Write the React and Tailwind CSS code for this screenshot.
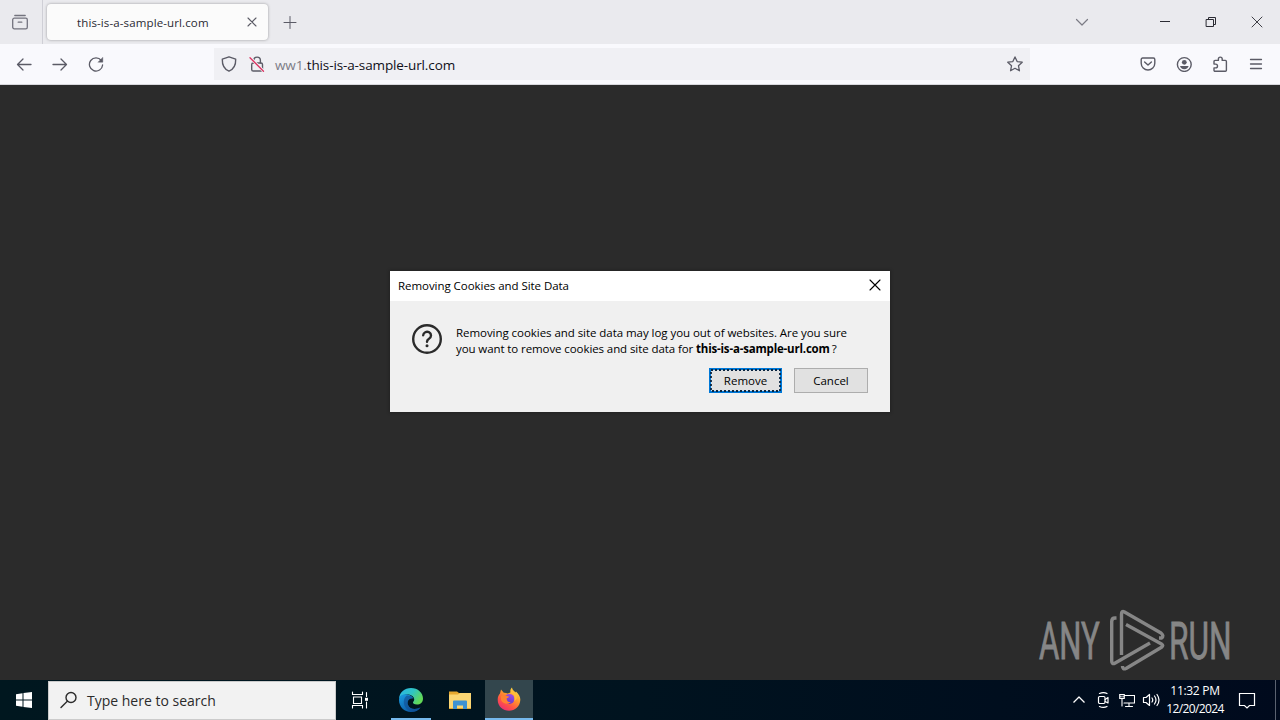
import React from 'react';

const Icon = ({ size = 16, className = '', children, sw = 1.2 }) => (
    <svg
        width={size}
        height={size}
        viewBox={`0 0 ${size} ${size}`}
        fill="none"
        stroke="currentColor"
        strokeWidth={sw}
        strokeLinecap="round"
        strokeLinejoin="round"
        className={`shrink-0 ${className}`}
    >
        {children}
    </svg>
);

const TabBar = () => (
    <div className="flex h-11 items-center bg-[#eaeaee] text-[#5b5b66]">
        <div className="flex h-full w-[43px] items-center border-r border-[#cfcfd6] pl-3 text-[#73737e]">
            <Icon sw={1.3}>
                <path d="M2.8 1.5h10.4" />
                <rect x="0.7" y="4.2" width="14.6" height="10.6" rx="1.6" />
                <path d="M6.2 8.2h3.6" />
            </Icon>
        </div>
        <div className="ml-1 flex h-9 w-[221px] items-center rounded bg-[#fbfbfb] pl-[30px] shadow-[0_0_3px_rgba(0,0,0,0.35)]">
            <span className="w-[166px] pt-px whitespace-nowrap text-[11.5px] tracking-[0.12px] text-[#2a2a33]">this-is-a-sample-url.com</span>
            <Icon size={18} sw={1.1}>
                <path d="M5 5l8 8M13 5l-8 8" />
            </Icon>
        </div>
        <Icon size={16} className="ml-3.5" sw={1}>
            <path d="M8 2.5v12M2 8.5h12" />
        </Icon>
        <div className="flex-1" />
        <Icon size={16} className="mr-[52px] text-[#7b7b85]" sw={1.2}>
            <path d="M2.5 5.5L8 11l5.5-5.5" />
        </Icon>
        <div className="flex text-[#2b2b33]">
            <div className="flex w-[46px] justify-center">
                <Icon size={14} sw={1}><path d="M2 6.5h10" strokeLinecap="butt" /></Icon>
            </div>
            <div className="flex w-[46px] justify-center">
                <Icon size={14} sw={1}>
                    <path d="M2.5 4.5h7v7h-7zM4.5 4.5v-2h7v7h-2" strokeLinejoin="miter" />
                </Icon>
            </div>
            <div className="flex w-[46px] justify-center">
                <Icon size={14} sw={0.9}><path d="M2 2l10 10M12 2L2 12" /></Icon>
            </div>
        </div>
    </div>
);

const Toolbar = () => (
    <div className="flex h-[41px] items-center border-b border-[#d8d8dd] bg-[#f9f9fd] px-1.5 text-[#5b5b66]">
        <div className="flex w-9 justify-center">
            <Icon sw={1.3}><path d="M15 8.5H1.5M7 3L1.5 8.5 7 14" /></Icon>
        </div>
        <div className="flex w-9 justify-center">
            <Icon sw={1.3}><path d="M1 8.5h13.5M9 3l5.5 5.5L9 14" /></Icon>
        </div>
        <div className="flex w-9 justify-center">
            <Icon sw={1.3}>
                <path d="M13.3 4.5A6.6 6.6 0 1 0 14.6 9" />
                <path d="M14.8 1.6v4.6h-4.6z" fill="currentColor" strokeWidth="0.4" />
            </Icon>
        </div>
        <div className="ml-[100px] flex h-8 w-[816px] items-center bg-[#f0f0f4] px-[7px]">
            <Icon sw={1.4}>
                <path d="M8 0.8L14.7 3.2C14.9 9.4 12.6 13.2 8 15.2 3.4 13.2 1.1 9.4 1.3 3.2z" />
            </Icon>
            <Icon className="ml-3" sw={1.4}>
                <rect x="2.7" y="7" width="10.8" height="8" rx="1.6" />
                <path d="M4.8 7V4.4a3.3 3.3 0 0 1 6.6 0V7" />
                <path d="M1.2 1.8l13 13" stroke="#f0f0f4" strokeWidth="3" />
                <path d="M1 1.8l13.5 13.4" stroke="#dc3563" strokeWidth="1.3" />
            </Icon>
            <span className="ml-2.5 flex-1 pt-[3px] whitespace-nowrap text-[13.5px] tracking-[-0.12px] text-[#0f0f18]">
                <span className="text-[#7c7c86]">ww1.</span>this-is-a-sample-url.com
            </span>
            <Icon sw={1.3}>
                <path d="M8 0.9l2.15 4.7 5.1.6-3.8 3.5 1 5.1L8 12.3l-4.45 2.5 1-5.1L.75 6.2l5.1-.6z" />
            </Icon>
        </div>
        <div className="ml-[100px] flex">
            <div className="flex w-9 justify-center">
                <Icon sw={1.4}>
                    <path d="M2.6 2h10.8a1.4 1.4 0 0 1 1.4 1.4V7.2a6.8 6.8 0 0 1-13.6 0V3.4A1.4 1.4 0 0 1 2.6 2z" />
                    <path d="M4.6 6L8 9.1 11.4 6" />
                </Icon>
            </div>
            <div className="flex w-9 justify-center">
                <Icon sw={1.4}>
                    <circle cx="8.3" cy="8.5" r="6.9" />
                    <circle cx="8.3" cy="6.3" r="2.4" fill="currentColor" stroke="none" />
                    <path d="M4 10h8.6c-.4 1.9-2 3.2-4.3 3.2S4.4 11.9 4 10z" fill="currentColor" stroke="none" />
                </Icon>
            </div>
            <div className="flex w-9 justify-center">
                <Icon sw={1.4}>
                    <path d="M2 7.2V5.4a1 1 0 0 1 1-1h3.4V3a1.9 1.9 0 0 1 3.8 0v1.4h3.2a1 1 0 0 1 1 1v8.8a1 1 0 0 1-1 1H3a1 1 0 0 1-1-1v-2.3h1.6a1.9 1.9 0 0 0 0-3.8H2z" />
                </Icon>
            </div>
            <div className="flex w-9 justify-center">
                <Icon sw={1.3}><path d="M2.5 3.5h11M2.5 8h11M2.5 12.5h11" /></Icon>
            </div>
        </div>
    </div>
);

const CookieDialog = () => (
    <div className="mt-[186px] h-[141px] w-[500px] bg-[#f0f0f0] text-[11.5px] text-black shadow-[0_0_3px_1px_rgba(0,0,0,0.2)]">
        <div className="flex h-[30px] items-center justify-between bg-white px-2">
            <span className="pb-px whitespace-nowrap tracking-[-0.05px]">Removing Cookies and Site Data</span>
            <Icon size={14} sw={1.1} className="-mt-0.5"><path d="M2 2l10 10M12 2L2 12" /></Icon>
        </div>
        <div className="flex pl-[21px] pt-[22px]">
            <Icon size={32} sw={2.4} className="text-[#2b2b2b]">
                <circle cx="16" cy="16" r="13.8" />
                <path d="M12.2 12.3a3.9 3.7 0 1 1 5.8 3.4c-1.4.8-2 1.4-2 3" />
                <circle cx="16" cy="22.8" r="1.5" fill="currentColor" stroke="none" />
            </Icon>
            <p className="ml-[13px] mt-0.5 whitespace-nowrap leading-4">
                <span className="tracking-[-0.05px]">Removing cookies and site data may log you out of websites. Are you sure</span>
                <br />
                <span className="tracking-[-0.09px]">you want to remove cookies and site data for </span>
                <b className="tracking-[-0.19px]">this-is-a-sample-url.com</b>
                <span className="ml-0.5">?</span>
            </p>
        </div>
        <div className="mt-[11px] flex justify-end gap-3 pr-[22px]">
            <button className="relative h-[25px] w-[73px] border-2 border-[#0078d7] bg-[#e1e1e1]">
                Remove
                <svg className="absolute -left-px -top-px" width="71" height="23" fill="none">
                    <rect x="1" y="1" width="69" height="21" stroke="#0a2540" strokeWidth="1.8" strokeDasharray="2 2" />
                </svg>
            </button>
            <button className="h-[25px] w-[74px] border border-[#adadad] bg-[#e1e1e1]">Cancel</button>
        </div>
    </div>
);

const Watermark = () => (
    <svg width="194" height="64" viewBox="1038 608 194 64" fill="none" className="absolute bottom-2 right-12">
        <g fill="#868686" stroke="#868686" strokeWidth="0.8" fontFamily="Roboto, sans-serif" fontSize="51">
            <text transform="translate(1039 659) scale(0.62 1)" textLength="98" lengthAdjust="spacingAndGlyphs">ANY</text>
            <text transform="translate(1169 659) scale(0.62 1)" textLength="101" lengthAdjust="spacingAndGlyphs">RUN</text>
        </g>
        <g stroke="#868686" strokeWidth="3.4" strokeLinejoin="round" strokeLinecap="butt">
            <path d="M1116.5 618h-1.5q-3.3 0-3.3 3.5V661q0 4 3.5 2L1150 643" />
            <path d="M1121.5 655V614q0-3.500 3-2l36.500 21q3.500 3 .5 5h-2.500" />
            <path d="M1126 624.500L1161.500 644q2.500 1.500 0 3.300L1126 668.500q-3.500 1.500-3.500-2.500" />
        </g>
    </svg>
);

const EdgeLogo = () => (
    <svg width="26" height="26" viewBox="0 0 26 26">
        <defs>
            <linearGradient id="edgeTop" x1="0" y1="0" x2="1" y2="0.5">
                <stop offset="0" stopColor="#2bb5e8" />
                <stop offset="0.55" stopColor="#2fc4c4" />
                <stop offset="1" stopColor="#62d957" />
            </linearGradient>
            <linearGradient id="edgeBase" x1="0" y1="0" x2="0.6" y2="1">
                <stop offset="0" stopColor="#1b9de2" />
                <stop offset="1" stopColor="#0b59a4" />
            </linearGradient>
        </defs>
        <path d="M1 12C1.5 5 6.5 1 13 1c7 0 12 5 12 10.5 0 4-2.8 6-6 6-3 0-4.3-1.2-4-2.3.6-.8 1.2-1.5 1.2-2.9C16 9.5 13 7.5 9 7.5c-4 0-7 2.2-8 4.5z" fill="url(#edgeTop)" />
        <path d="M1 13C1 9 4.5 6.8 9 7.5c3.5.5 5.5 2.2 6.5 4-4-1-7 2.5-5.5 6.5 1.7 4.3 7.5 5 12.5 2.5C20.5 23.5 17 25 13 25 6 25 1 19.5 1 13z" fill="url(#edgeBase)" />
        <path d="M9 8.5c-3 2-4 6-2.5 10S12 25 15 24.8c3.5-.5 6-2.2 7.5-4.3-5 2.5-10.8 1.8-12.5-2.5-1.5-4 1.5-7.5 5.5-6.5C14 9.5 12 8.5 9 8.5z" fill="#124f94" opacity="0.65" />
    </svg>
);

const FolderLogo = () => (
    <svg width="24" height="22" viewBox="0 0 24 22">
        <path d="M1 2.5h8l2 1.5h12V20H1z" fill="#e6a82f" />
        <path d="M1 5.5h9l2-1.5h11v15H1z" fill="#fbd673" />
        <path d="M5 12.5q0-1 1-1h12q1 0 1 1V20h-4v-3.5H9V20H5z" fill="#3f92d2" />
    </svg>
);

const FirefoxLogo = () => (
    <svg width="26" height="26" viewBox="0 0 26 26">
        <defs>
            <linearGradient id="fox" x1="0.85" y1="0" x2="0.2" y2="1">
                <stop offset="0" stopColor="#ffe84a" />
                <stop offset="0.4" stopColor="#ff982b" />
                <stop offset="0.7" stopColor="#ff5345" />
                <stop offset="1" stopColor="#e82a78" />
            </linearGradient>
            <linearGradient id="foxGlobe" x1="0.7" y1="0" x2="0.3" y2="1">
                <stop offset="0" stopColor="#a04be8" />
                <stop offset="1" stopColor="#5d3bc4" />
            </linearGradient>
        </defs>
        <path d="M4 7.5L5 3.5l2.8 3.2C9 6.5 10.500 7 11.5 7.5l3-1c-.5-2 0-3.5 1.5-5 .3 2.3 1.6 3.4 3.4 4.9l.6-1C23 8 24.5 11 24.3 14 24 20.5 19 24.8 13 24.8S1.7 20.5 1.7 13.8C1.7 11 2.5 9 4 7.5z" fill="url(#fox)" />
        <circle cx="13.4" cy="12.9" r="5" fill="url(#foxGlobe)" />
        <path d="M5 10c2-1.500 4.500-1.200 6 0l2 .4c-.3 1.200-1.300 1.300-2.300 1.900-.2 2.700 1.800 4 4 3.800-1.500 2.500-7.700 2.500-9.700-2z" fill="#ff8232" />
        <path d="M14.5 6.5c3 1 5 4.500 3.800 8.5 2-1 3-2.800 2.700-5.500-.5-2.500-3-4.500-5-6z" fill="#ffbd3a" />
    </svg>
);

const Taskbar = () => (
    <div className="flex h-10 items-center bg-linear-to-r from-[#00171f] via-[#00131f] to-[#000a1d] text-white">
        <div className="flex w-12 justify-center">
            <svg width="16" height="16" viewBox="0 0 16 16" fill="white">
                <path d="M0 2.2l6.5-.9v6.2H0zM7.5 1.1L16 0v7.5H7.5zM0 8.5h6.5v6.2L0 13.8zM7.5 8.5H16V16l-8.5-1.1z" />
            </svg>
        </div>
        <div className="flex h-[39px] w-72 items-center border border-[#cbcbcb] bg-[#f2f2f2] pl-[11px] text-[#2b2b2b]">
            <Icon size={18} sw={1.4}>
                <circle cx="11" cy="6.5" r="5" />
                <path d="M7.3 10.2L1 16.5" />
            </Icon>
            <span className="ml-[9px] pt-px whitespace-nowrap text-[14px]">Type here to search</span>
        </div>
        <div className="flex h-full w-12 items-center justify-center">
            <Icon size={18} sw={1.1}>
                <path d="M1.5 1v2.5h10V1M2.5 6h8v6.5h-8zM1.5 17v-2.5h10V17M15.5 1.5v4M15.5 11v6" strokeLinejoin="miter" />
                <path d="M14 6.8h3v3h-3z" fill="currentColor" stroke="none" />
            </Icon>
        </div>
        <div className="ml-[7px] flex h-full w-10 items-center justify-center border-b-2 border-[#76b9ed] pt-0.5"><EdgeLogo /></div>
        <div className="flex w-[54px] justify-center pl-1"><FolderLogo /></div>
        <div className="flex h-full w-12 items-center justify-center border-b-2 border-[#76b9ed] bg-[#33464d]"><FirefoxLogo /></div>
        <div className="flex-1" />
        <div className="flex items-center">
            <div className="flex w-6 justify-center"><Icon sw={1.3}><path d="M2.5 10.5L8 5l5.5 5.5" strokeLinecap="butt" /></Icon></div>
            <div className="flex w-6 justify-center">
                <Icon sw={1.2}>
                    <rect x="3.5" y="4.5" width="6.5" height="7" rx="1.2" />
                    <path d="M10.2 7.5L13 5.5v5.5l-2.8-1.5M4.5 1.5q4-1.8 7.5 0M4.5 14.5q4 1.8 7.5 0" />
                </Icon>
            </div>
            <div className="flex w-6 justify-center">
                <Icon sw={1.1}>
                    <path d="M6 3.5h9.5v7.5H5M10 11v3M6.5 14.5h7M.7 2.5h4.6v4H.7zM3 6.5v7.5M2 4v1M4 4v1" strokeLinejoin="miter" />
                </Icon>
            </div>
            <div className="flex w-6 justify-center">
                <Icon size={18} sw={1.2}>
                    <path d="M1.5 6.5H4L7.5 3.5v11L4 11.5H1.5zM10 7q1.5 2 0 4M12.5 5q3 4 0 8M15 3.5q4 5.5 0 11" />
                </Icon>
            </div>
            <div className="w-16 whitespace-nowrap text-center text-[12px] leading-[18px] tracking-[-0.3px]">
                11:32 PM<br />
                <span className="tracking-[-0.6px]">12/20/2024</span>
            </div>
            <div className="ml-[11px] flex w-[18px]">
                <Icon size={18} sw={1.2}>
                    <path d="M1.5 2.5h15v12h-5L9 17l-2.5-2.5h-5z" strokeLinejoin="miter" />
                </Icon>
            </div>
            <div className="ml-[19px] h-10 w-[5px] border-l border-[#5a6270]" />
        </div>
    </div>
);

const App = () => (
    <div className="flex h-[720px] w-[1280px] flex-col overflow-hidden bg-[#2b2b2b] font-['Open_Sans','Noto_Sans',sans-serif]">
        <TabBar />
        <Toolbar />
        <div className="relative flex flex-1 items-start justify-center">
            <CookieDialog />
            <Watermark />
        </div>
        <Taskbar />
    </div>
);

export default App;
